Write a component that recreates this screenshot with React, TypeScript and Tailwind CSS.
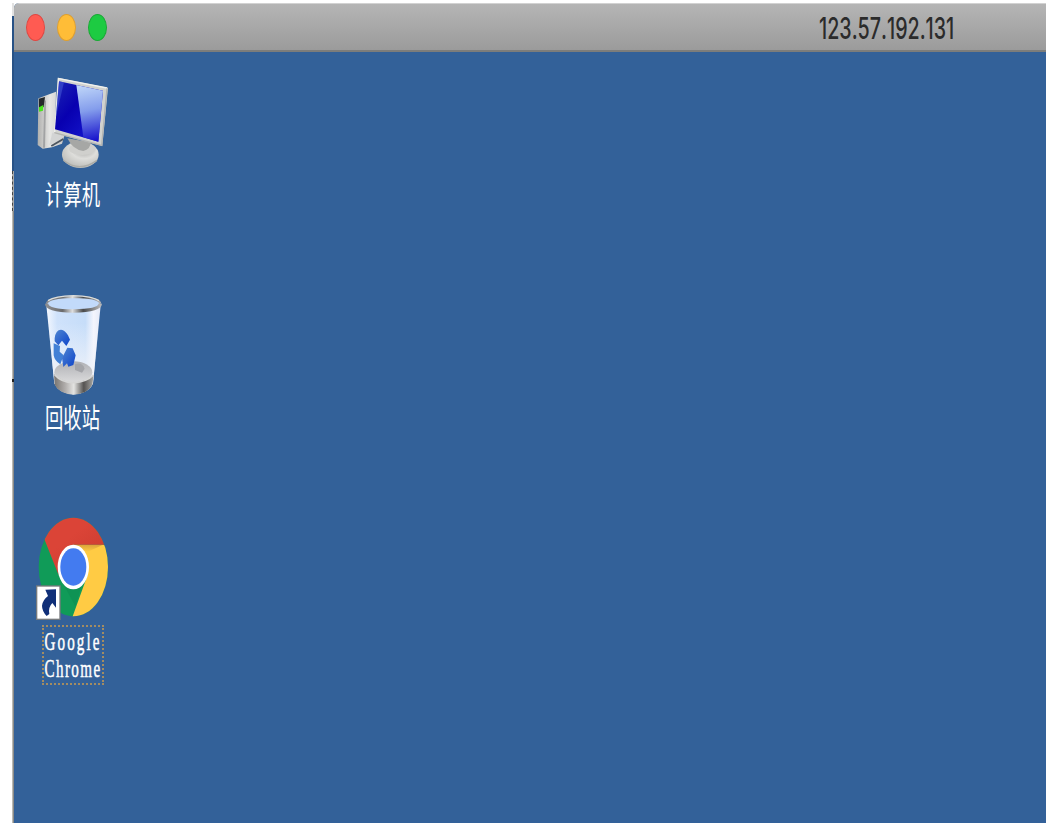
import React from "react";

const ComputerIcon = () => (
  <svg viewBox="45 15 228 315" className="h-[105px] w-[76px]">
    <defs>
      <linearGradient id="screen" x1="0" y1="0" x2="1" y2="1">
        <stop offset="0" stopColor="#1c26b4" />
        <stop offset="0.4" stopColor="#0800b0" />
        <stop offset="1" stopColor="#1a20d8" />
      </linearGradient>
      <linearGradient id="glare" x1="0.4" y1="0" x2="0.5" y2="1">
        <stop offset="0" stopColor="#bdd4f8" />
        <stop offset="0.45" stopColor="#849dec" />
        <stop offset="1" stopColor="#1712cc" />
      </linearGradient>
      <linearGradient id="tower" x1="0" y1="0" x2="1" y2="0">
        <stop offset="0" stopColor="#b0b0ae" />
        <stop offset="0.45" stopColor="#e6e6e4" />
        <stop offset="1" stopColor="#c4c4c4" />
      </linearGradient>
      <radialGradient id="stand" cx="0.6" cy="0.3" r="0.7">
        <stop offset="0" stopColor="#a5a5a3" />
        <stop offset="0.5" stopColor="#dededb" />
        <stop offset="1" stopColor="#bdbdb9" />
      </radialGradient>
    </defs>
    <path d="M55 100L108 80L106 196L134 210L126 236L96 247L68 251L53 240Z" fill="url(#tower)" />
    <path d="M73 108L78 106L75 248L69 248Z" fill="#a2a3a4" />
    <path d="M97 203L133 214L118 226L88 240Z" fill="#d3d4d4" />
    <path d="M94 243L130 222" stroke="#4d5660" strokeWidth="6" />
    <path d="M57 101L75 96L71 126L57 132Z" fill="#252829" />
    <path d="M57 127L70 120L69 137L57 140Z" fill="#49e51c" />
    <ellipse cx="181" cy="269" rx="55" ry="40" fill="url(#stand)" />
    <ellipse cx="187" cy="252" rx="40" ry="18" fill="#d0d0cd" />
    <path d="M142 220Q160 256 190 258Q212 253 212 232Z" fill="#a6a7a5" />
    <path d="M130 286Q178 324 231 286" fill="none" stroke="#acaca7" strokeWidth="4" />
    <path d="M113 38L264 68L247 243L102 204Z" fill="#d1d2cf" />
    <path d="M104 202L116 41L261 69" fill="none" stroke="#f0f0ec" strokeWidth="4" />
    <path d="M261 70L245 241L103 203" fill="none" stroke="#b3b4b2" strokeWidth="4" />
    <path d="M117 49L249 77L235 230L105 193Z" fill="url(#screen)" />
    <path d="M169 60L249 77L235 230L190 217Z" fill="url(#glare)" />
    <path d="M117 49L132 52L107 158Z" fill="#4b5fdc" opacity="0.5" />
  </svg>
);

const RecycleBinIcon = () => (
  <svg viewBox="45 24 228 315" className="h-[105px] w-[76px]">
    <defs>
      <linearGradient id="glass" x1="0" y1="0" x2="1" y2="0">
        <stop offset="0" stopColor="#f4f8ff" />
        <stop offset="0.2" stopColor="#cfe2fb" />
        <stop offset="0.72" stopColor="#c6ddf9" />
        <stop offset="0.87" stopColor="#f4f5fd" />
        <stop offset="1" stopColor="#e4e9f7" />
      </linearGradient>
      <linearGradient id="fade" x1="0" y1="0" x2="0" y2="1">
        <stop offset="0.2" stopColor="#f3f6fd" stopOpacity="0" />
        <stop offset="0.75" stopColor="#f1f3f8" stopOpacity="0.85" />
      </linearGradient>
      <linearGradient id="metal" x1="0" y1="0" x2="1" y2="0">
        <stop offset="0" stopColor="#77736f" />
        <stop offset="0.3" stopColor="#b4b1af" />
        <stop offset="0.5" stopColor="#e4e4e2" />
        <stop offset="0.75" stopColor="#555351" />
        <stop offset="1" stopColor="#aaa9a5" />
      </linearGradient>
      <linearGradient id="rim" x1="0" y1="0" x2="1" y2="0">
        <stop offset="0" stopColor="#8c8d90" />
        <stop offset="0.3" stopColor="#6b6b6c" />
        <stop offset="0.48" stopColor="#dedede" />
        <stop offset="0.68" stopColor="#4a4a4b" />
        <stop offset="1" stopColor="#b5b5b6" />
      </linearGradient>
      <linearGradient id="arrows" x1="0" y1="0" x2="1" y2="1">
        <stop offset="0" stopColor="#4f86d1" />
        <stop offset="1" stopColor="#0d43ca" />
      </linearGradient>
      <linearGradient id="paper" x1="0" y1="0" x2="0" y2="1">
        <stop offset="0" stopColor="#b0b1b5" />
        <stop offset="1" stopColor="#dcdcdd" />
      </linearGradient>
    </defs>
    <path d="M79 61L242 61L219 295Q205 327 159 328Q116 325 103 295Z" fill="url(#glass)" />
    <path d="M79 61L242 61L219 295Q205 327 159 328Q116 325 103 295Z" fill="url(#fade)" />
    <ellipse cx="160" cy="262" rx="57" ry="33" fill="url(#paper)" />
    <path d="M165 238Q186 230 194 251L186 263L165 255Z" fill="#a4a5a9" />
    <path d="M102 266Q125 290 160 292Q201 290 221 269L217 299Q204 326 160 329Q117 325 104 299Z" fill="url(#metal)" />
    <path d="M103 268Q125 293 160 293Q201 291 220 270" fill="none" stroke="#d6d6d5" strokeWidth="5" />
    <path d="M104 160Q107 134 123 134Q136 136 144 151L150 164L139 183L126 167L115 181L104 169Z" fill="url(#arrows)" />
    <path d="M101 175L120 183L119 200L131 211L121 238Q104 228 101 211Z" fill="#4180d6" />
    <path d="M126 219L142 188L158 190L167 211L160 240L145 245L141 235L130 246Z" fill="url(#arrows)" />
    <ellipse cx="160" cy="56" rx="80" ry="20" fill="#c2dafa" />
    <path d="M80 56Q80 77 160 78Q240 77 241 56" fill="none" stroke="url(#rim)" strokeWidth="10" />
    <path d="M80 56Q84 37 160 36Q238 37 241 56" fill="none" stroke="url(#rim)" strokeWidth="6" />
    <path d="M84 47Q105 34 160 32Q218 34 237 47" fill="none" stroke="#dededa" strokeWidth="4" />
  </svg>
);

const ChromeIcon = () => (
  <svg viewBox="45 18 228 315" className="h-[105px] w-[76px]">
    <defs>
      <clipPath id="disc">
        <ellipse cx="160" cy="171" rx="104" ry="148" />
      </clipPath>
      <linearGradient id="redShade" x1="0" y1="0" x2="1" y2="1">
        <stop offset="0.4" stopColor="#db4437" />
        <stop offset="1" stopColor="#c63a2d" />
      </linearGradient>
      <linearGradient id="yellowShade" x1="0" y1="0" x2="0" y2="1">
        <stop offset="0" stopColor="#d9a33a" />
        <stop offset="1" stopColor="#ffcb44" />
      </linearGradient>
    </defs>
    <g clipPath="url(#disc)">
      <rect x="50" y="20" width="220" height="310" fill="#109b58" />
      <path d="M160 104H270V330H154L203 194Z" fill="#ffcb44" />
      <path d="M160 104H249L202 126Z" fill="url(#yellowShade)" />
      <path d="M50 20H270V104H160Q125 110 116 171V196L75 92Z" fill="url(#redShade)" />
      <path d="M128 218L185 225L166 289Z" fill="#0a824c" opacity="0.3" />
    </g>
    <ellipse cx="160" cy="171" rx="47" ry="67" fill="#fff" />
    <ellipse cx="160" cy="171" rx="39" ry="56" fill="#437bf0" />
    <rect x="50" y="228" width="70" height="100" fill="#fff" stroke="#777a7d" strokeWidth="4" />
    <path d="M76 239L108 238V293L97 279Q84 292 88 312L80 318Q66 303 66 287Q68 270 84 258Z" fill="#102f78" />
  </svg>
);

interface DesktopItemProps {
  icon: React.ReactNode;
  children: React.ReactNode;
}

const DesktopItem: React.FC<DesktopItemProps> = ({ icon, children }) => (
  <div className="flex h-[223px] w-[76px] flex-col items-center">
    {icon}
    {children}
  </div>
);

const ChineseLabel = ({ text }: { text: string }) => (
  <span className="mt-[5px] mr-0.5 scale-x-[0.68] whitespace-nowrap font-['Noto_Sans_CJK_SC',sans-serif] text-[27px] leading-[28px] text-white">
    {text}
  </span>
);

export default function App() {
  return (
    <div className="h-[826px] w-[1050px] overflow-hidden bg-white pt-[3px] pl-3">
      <div className="flex h-[820px] w-[1034px]">
        <div className="flex w-0.5 shrink-0 flex-col">
          <div className="h-[13px] bg-[#e2e2e2]" />
          <div className="h-[155px] bg-[#285286]" />
          <div className="h-[40px] border-l border-dashed border-[#444] bg-[#aaa]" />
          <div className="h-[168px] border-l border-[#b9b9b5] bg-[#8a8a88]" />
          <div className="h-[3px] bg-[#222]" />
          <div className="flex-1 border-l border-[#b9b9b5] bg-[#8a8a88]" />
        </div>
        <div className="flex flex-1 flex-col overflow-hidden rounded-tl-[5px] bg-[#336199]">
          <header className="flex h-[49px] shrink-0 items-center border-t border-b-2 border-t-[#d2d2d2] border-b-[#7d7d7b] bg-linear-to-b from-[#b5b5b5] to-[#9b9b9b]">
            <div className="flex w-[94px] gap-3 pl-3">
              <span className="h-[27px] w-[19px] rounded-[50%] border border-[#df4843] bg-[#ff5b52]" />
              <span className="h-[27px] w-[19px] rounded-[50%] border border-[#dd9f31] bg-[#ffbd37]" />
              <span className="h-[27px] w-[19px] rounded-[50%] border border-[#1aaa36] bg-[#1dcb42]" />
            </div>
            <h1 className="mt-[3px] ml-[711px] origin-left scale-x-[0.667] whitespace-nowrap font-[Inter,sans-serif] text-[29.5px] font-medium text-[#2b2b2b] [font-kerning:none]">
              123.57.192.131
            </h1>
          </header>
          <main className="flex flex-col pt-[18px] pl-[21px]">
            <DesktopItem icon={<ComputerIcon />}>
              <ChineseLabel text="计算机" />
            </DesktopItem>
            <DesktopItem icon={<RecycleBinIcon />}>
              <ChineseLabel text="回收站" />
            </DesktopItem>
            <DesktopItem icon={<ChromeIcon />}>
              <div className="mt-1 flex h-[60px] w-[62px] shrink-0 justify-center border-2 border-dotted border-[#a38c62]">
                <p className="mt-px flex w-[104px] shrink-0 scale-x-[0.58] flex-col items-center font-['Liberation_Serif',serif] text-[26px] leading-[27px] text-white [-webkit-text-stroke:0.5px_white]">
                  <span className="tracking-[3.6px]">Google</span>
                  <span className="tracking-[2.4px]">Chrome</span>
                </p>
              </div>
            </DesktopItem>
          </main>
        </div>
      </div>
    </div>
  );
}
